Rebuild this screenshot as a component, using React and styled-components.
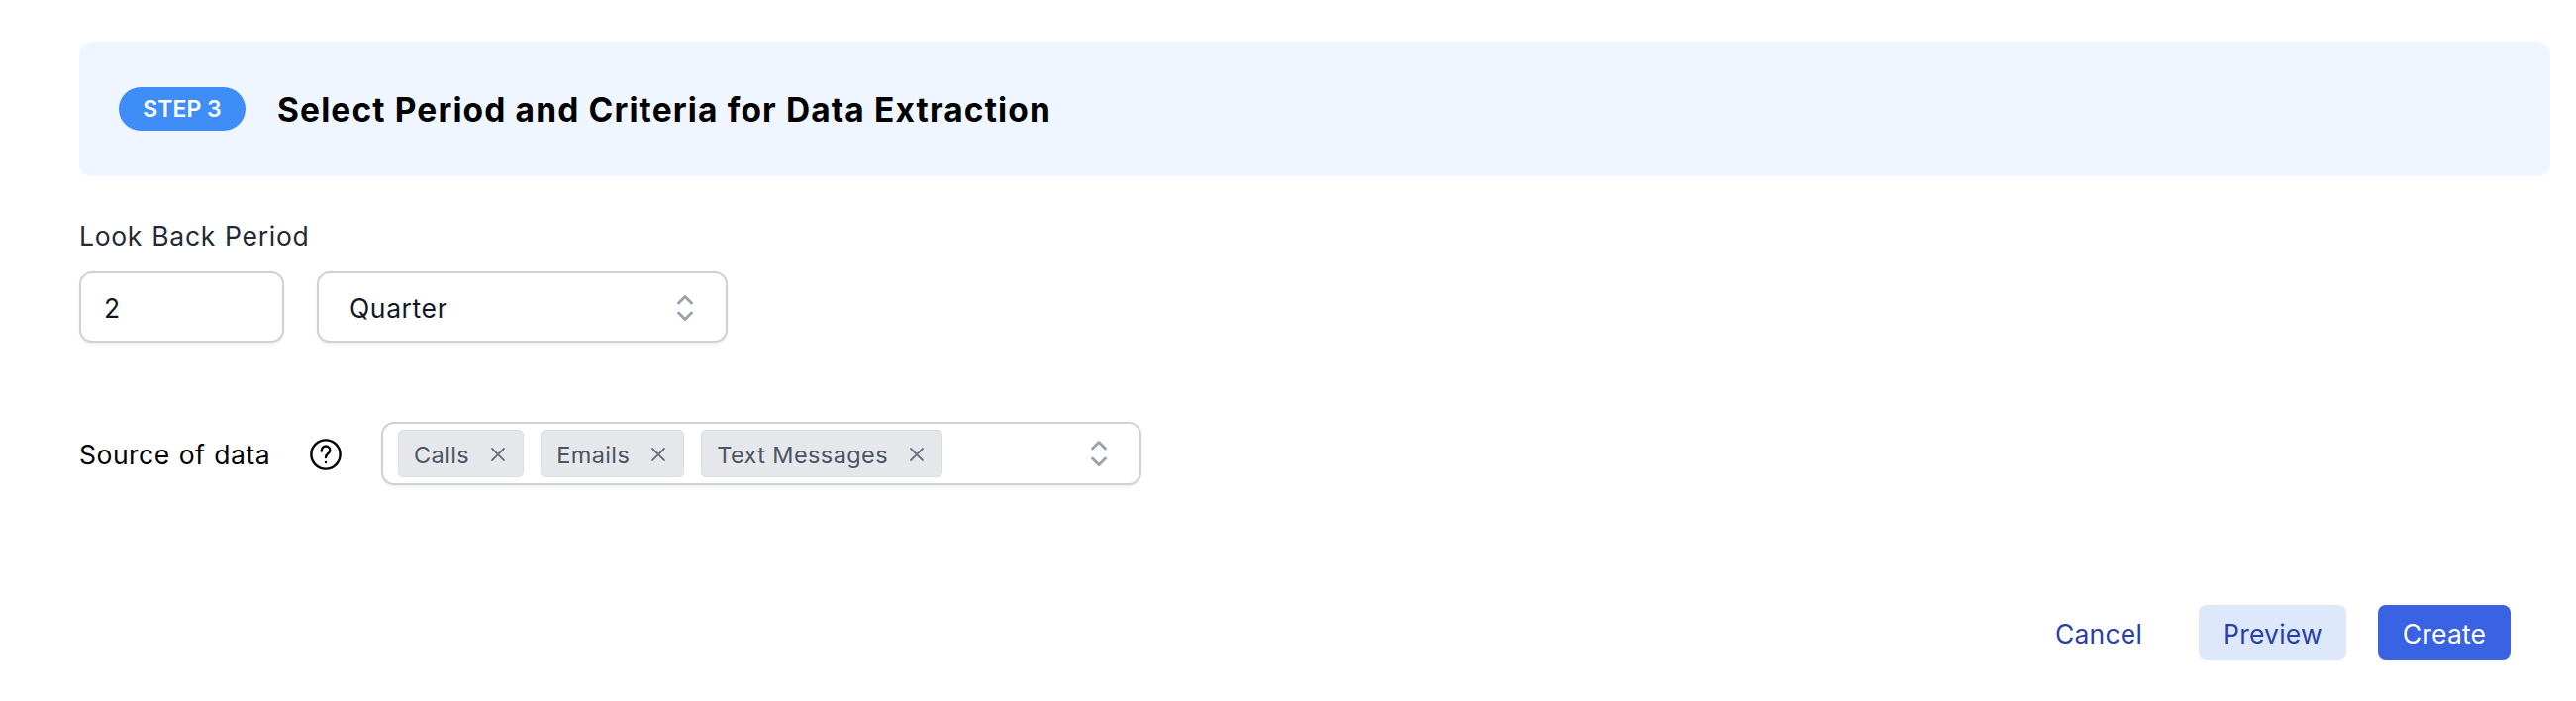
import React from "react";
import styled, { createGlobalStyle } from "styled-components";

const Global = createGlobalStyle`
  html, body { margin: 0; padding: 0; background: #fff; }
  body { font-family: Inter, "Liberation Sans", sans-serif; }
`;

const Page = styled.div`
  width: 2602px;
  height: 708px;
  box-sizing: border-box;
  padding: 42px 26px 0 80px;
  display: flex;
  flex-direction: column;
  overflow: hidden;
`;

const Banner = styled.header`
  height: 136px;
  box-sizing: border-box;
  background: #eff6ff;
  border-radius: 13px;
  padding: 0 0 0 40px;
  display: flex;
  align-items: center;
  gap: 32px;
`;

const StepPill = styled.span`
  width: 128px;
  height: 44px;
  border-radius: 22px;
  background: #3f8ef8;
  color: #fff;
  font-size: 23px;
  font-weight: 600;
  display: flex;
  align-items: center;
  justify-content: center;
`;

const Title = styled.h1`
  margin: 2px 0 0;
  font-size: 33.5px;
  font-weight: 700;
  letter-spacing: 1.13px;
  color: #000;
`;

const FieldLabel = styled.label`
  display: block;
  margin-top: 44px;
  height: 32px;
  line-height: 32px;
  font-size: 26.5px;
  font-weight: 400;
  letter-spacing: 0.7px;
  word-spacing: 1px;
  color: #1f2937;
`;

const PeriodRow = styled.div`
  margin-top: 20px;
  display: flex;
  gap: 33px;
`;

const Control = styled.div`
  box-sizing: border-box;
  height: 72px;
  width: ${(p) => p.$w}px;
  background: #fff;
  border: 2px solid #cdd1d8;
  border-radius: 13px;
  box-shadow: 0 2px 3px rgba(0, 0, 0, 0.05);
  display: flex;
  align-items: center;
  justify-content: space-between;
  padding: 2px 30px 0 ${(p) => p.$pl}px;
  font-size: 26.5px;
  letter-spacing: 0.6px;
  color: #111827;
`;

const SourceRow = styled.div`
  margin-top: 80px;
  display: flex;
  align-items: center;
`;

const SourceLabel = styled.span`
  width: 233px;
  padding-top: 1px;
  font-size: 26.5px;
  letter-spacing: 0.5px;
  word-spacing: 1px;
  color: #000;
`;

const HelpIcon = styled.svg`
  width: 32px;
  height: 32px;
  margin: 1px 40px 0 0;
  flex: none;
`;

const TagBox = styled.div`
  box-sizing: border-box;
  width: 768px;
  height: 64px;
  background: #fff;
  border: 2px solid #cdd1d8;
  border-radius: 13px;
  box-shadow: 0 2px 3px rgba(0, 0, 0, 0.05);
  display: flex;
  align-items: center;
  gap: 17px;
  padding: 0 30px 0 15px;
`;

const Chip = styled.span`
  box-sizing: border-box;
  height: 48px;
  display: inline-flex;
  align-items: center;
  gap: 21px;
  padding: 2px 17px 0 15px;
  background: #e5e7eb;
  border: 1px solid #dadde2;
  border-radius: 5px;
  font-size: 23.5px;
  letter-spacing: 0.4px;
  color: #4b5563;
`;

const ChipX = styled.svg`
  width: 16px;
  height: 16px;
  flex: none;
  margin-top: -1px;
`;

const Chevrons = styled.svg`
  width: 22px;
  height: 34px;
  flex: none;
  margin-left: auto;
`;

const Actions = styled.div`
  margin-top: 121px;
  display: flex;
  justify-content: flex-end;
  align-items: center;
  gap: 32px;
  padding-right: 40px;
`;

const Button = styled.button`
  height: 56px;
  width: ${(p) => p.$w}px;
  border: 0;
  border-radius: 8px;
  padding: 2px 0 0;
  font: 400 26.5px Inter, "Liberation Sans", sans-serif;
  letter-spacing: 0.2px;
  background: ${(p) => p.$bg};
  color: ${(p) => p.$fg};
`;

const Updown = () => (
  <Chevrons viewBox="0 0 22 34" fill="none" stroke="#9ca3af" strokeWidth="3" strokeLinecap="round" strokeLinejoin="round">
    <path d="M4.5 12 L11 5.5 L17.5 12" />
    <path d="M4.5 22 L11 28.5 L17.5 22" />
  </Chevrons>
);

const Tag = ({ children }) => (
  <Chip>
    {children}
    <ChipX viewBox="0 0 16 16" fill="none" stroke="#6b7280" strokeWidth="1.8" strokeLinecap="round">
      <path d="M2 2 L14 14 M14 2 L2 14" />
    </ChipX>
  </Chip>
);

export default function App() {
  return (
    <>
      <Global />
      <Page>
        <Banner>
          <StepPill>STEP 3</StepPill>
          <Title>Select Period and Criteria for Data Extraction</Title>
        </Banner>
        <FieldLabel>Look Back Period</FieldLabel>
        <PeriodRow>
          <Control $w={207} $pl={23}>2</Control>
          <Control $w={415} $pl={31}>
            Quarter
            <Updown />
          </Control>
        </PeriodRow>
        <SourceRow>
          <SourceLabel>Source of data</SourceLabel>
          <HelpIcon viewBox="0 0 32 32" fill="none" stroke="#000" strokeWidth="2.4" strokeLinecap="round">
            <circle cx="16" cy="16" r="14.6" />
            <path d="M11.8 12.5 C11.8 9.5 13.8 7.5 16 7.5 C18.5 7.5 20.3 9.5 20.3 11.8 C20.3 14 18.8 15 17.5 16 C16.5 16.8 16 17.5 16 19" />
            <path d="M16 24 L16 24.1" />
          </HelpIcon>
          <TagBox>
            <Tag>Calls</Tag>
            <Tag>Emails</Tag>
            <Tag>Text Messages</Tag>
            <Updown />
          </TagBox>
        </SourceRow>
        <Actions>
          <Button $w={138} $bg="#fff" $fg="#2840a8">Cancel</Button>
          <Button $w={149} $bg="#dee8fb" $fg="#2840a8">Preview</Button>
          <Button $w={134} $bg="#3a63e3" $fg="#fff">Create</Button>
        </Actions>
      </Page>
    </>
  );
}
